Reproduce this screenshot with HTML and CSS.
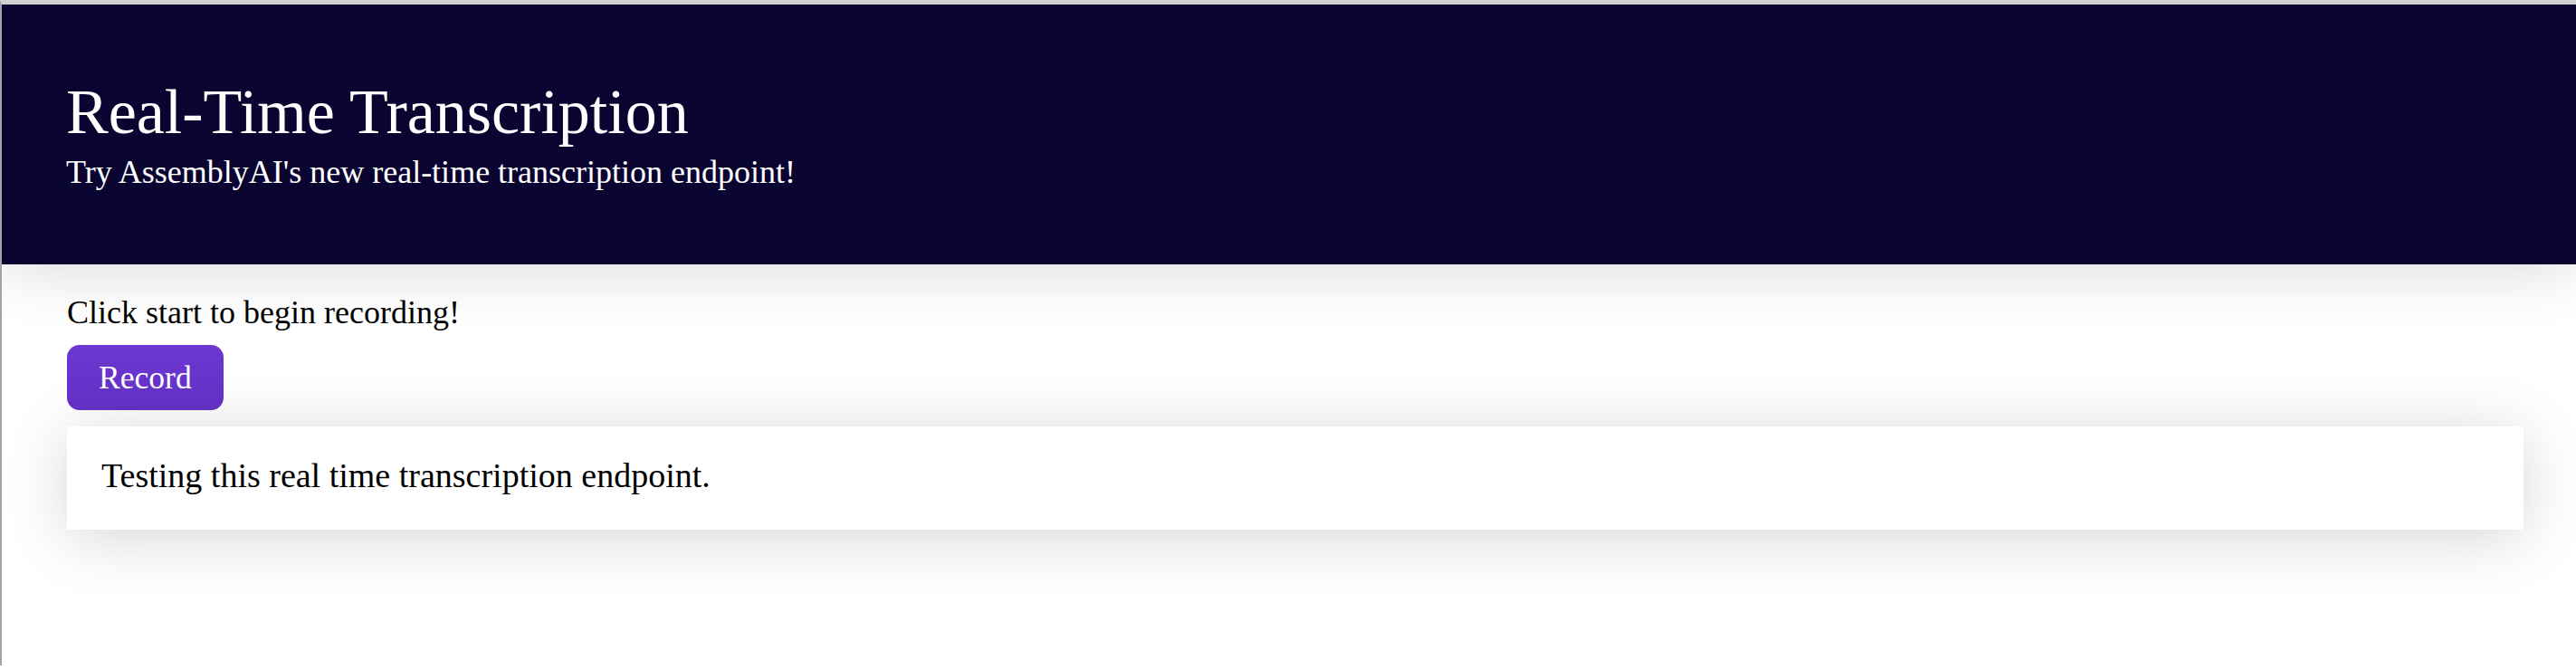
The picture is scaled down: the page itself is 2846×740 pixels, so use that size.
FILE: index.html
```html
<!DOCTYPE html>
<html lang="en">
<head>
<meta charset="utf-8">
<title>Real-Time Transcription</title>
<link rel="stylesheet" href="styles.css">
</head>
<body>
<div class="frame">
  <header class="hero">
    <h1 class="hero-title">Real-Time Transcription</h1>
    <p class="hero-sub">Try AssemblyAI's new real-time transcription endpoint!</p>
  </header>
  <main class="content">
    <p class="prompt">Click start to begin recording!</p>
    <button class="record-btn" type="button">Record</button>
    <div class="transcript">
      <p class="transcript-text">Testing this real time transcription endpoint.</p>
    </div>
  </main>
</div>
</body>
</html>
```
FILE: styles.css
```css
html, body {
  margin: 0;
  padding: 0;
  background: #ffffff;
}

body {
  font-family: "Liberation Serif", "Times New Roman", serif;
  color: #000000;
}

.frame {
  border-top: 5px solid #d2d2d2;
  border-left: 2px solid #a4a4a4;
  min-height: 735px;
  box-sizing: border-box;
  overflow: hidden;
}

.hero {
  position: relative;
  z-index: 1;
  background: #0a0530;
  color: #ffffff;
  padding: 84px 71px 83px;
  box-shadow: 0 12px 60px rgba(0, 0, 0, 0.13);
}

.hero-title {
  margin: 0;
  font-weight: normal;
  font-size: 70px;
  line-height: 69px;
}

.hero-sub {
  margin: 15px 0 0;
  font-size: 36px;
  line-height: 35.6px;
}

.content {
  padding: 36px 58px 60px 72px;
  display: flex;
  flex-direction: column;
  align-items: flex-start;
}

.prompt {
  margin: 0;
  font-size: 36px;
  line-height: 35.6px;
}

.record-btn {
  margin-top: 18px;
  height: 72px;
  box-sizing: border-box;
  padding: 0 35px;
  border: none;
  border-radius: 14px;
  background: linear-gradient(#6c36d2, #6532c8);
  color: #ffffff;
  font-family: "Liberation Serif", "Times New Roman", serif;
  font-size: 35.6px;
  line-height: 35.2px;
}

.transcript {
  margin-top: 18px;
  align-self: stretch;
  background: #ffffff;
  box-shadow: 0 8px 70px rgba(0, 0, 0, 0.17);
  padding: 36px 38px 40px;
}

.transcript-text {
  margin: 0;
  font-size: 38px;
  line-height: 37.6px;
}
```
